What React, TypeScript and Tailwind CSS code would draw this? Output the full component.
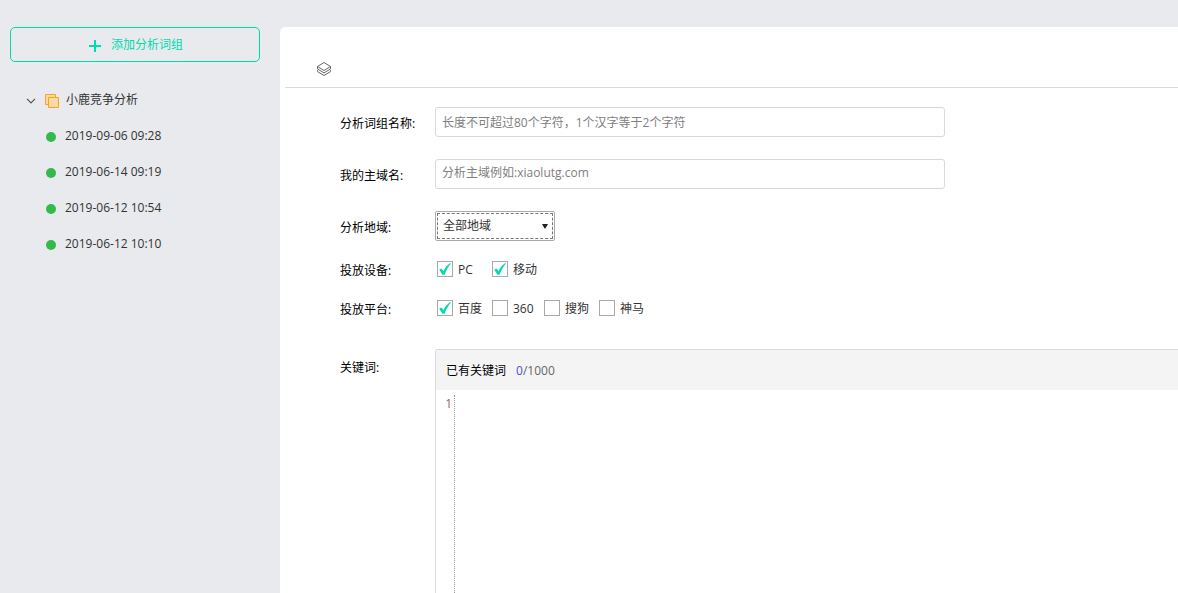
import { useState, type ReactNode } from "react";

const history = ["2019-09-06 09:28", "2019-06-14 09:19", "2019-06-12 10:54", "2019-06-12 10:10"];

function Field({ label, htmlFor, className, children }: { label: string; htmlFor?: string; className: string; children: ReactNode }) {
  return (
    <div className={`flex ${className}`}>
      {htmlFor ? (
        <label htmlFor={htmlFor} className="w-[95px] shrink-0 pt-1 text-black">{label}</label>
      ) : (
        <span className="w-[95px] shrink-0 pt-1 text-black">{label}</span>
      )}
      {children}
    </div>
  );
}

function CheckOption({ label, checked = false, className = "" }: { label: string; checked?: boolean; className?: string }) {
  return (
    <label className={`flex h-4 items-center gap-[5px] text-[#333] ${className}`}>
      <span className="grid">
        <input
          type="checkbox"
          defaultChecked={checked}
          className="peer col-start-1 row-start-1 size-4 appearance-none border border-[#a9a9a9] bg-white"
        />
        <svg viewBox="0 0 16 16" className="pointer-events-none invisible col-start-1 row-start-1 size-4 peer-checked:visible" aria-hidden="true">
          <path d="M2.2 8.4L4.6 7.4L6.4 10.2C8 6.8 10.2 4 13.2 2L13.8 2.8C11.2 5.8 9.2 9.4 7.6 13.8H5.4Z" fill="#00dbb0" />
        </svg>
      </span>
      <span className="pt-0.5">{label}</span>
    </label>
  );
}

export default function App() {
  const [keywords, setKeywords] = useState("");
  const count = keywords.split("\n").filter((line) => line.trim()).length;

  return (
    <div className="flex h-screen min-h-[480px] overflow-hidden bg-[#e8eaed] font-['Open_Sans','Noto_Sans_CJK_SC',sans-serif] text-xs leading-4 text-[#333]">
      <aside className="w-[280px] shrink-0 pt-[27px] pr-5 pl-2.5">
        <button type="button" className="flex h-[35px] w-full items-center justify-center gap-2.5 rounded-[5px] border border-[#00dbb0] pl-0.5 text-[#00dbb0]">
          <svg viewBox="0 0 12 12" className="mt-0.5 size-3" aria-hidden="true">
            <path d="M5 0H7V5H12V7H7V12H5V7H0V5H5Z" fill="currentColor" />
          </svg>
          添加分析词组
        </button>
        <nav className="pt-5">
          <a href="#group" className="flex h-9 items-center pl-4">
            <svg viewBox="0 0 10 6" className="mt-0.5 mr-[9px] h-1.5 w-2.5" fill="none" stroke="#555" strokeWidth="1.2" aria-hidden="true">
              <path d="M1 0.8L5 4.8L9 0.8" />
            </svg>
            <svg viewBox="0 0 14 14" className="mt-0.5 mr-[7px] size-3.5" fill="#fad8a8" stroke="#f5a816" aria-hidden="true">
              <path d="M0.5 0.5H10.5V10.5H0.5Z" />
              <path d="M3.5 3.5H13.5V13.5H3.5Z" />
            </svg>
            小鹿竞争分析
          </a>
          <ul>
            {history.map((time) => (
              <li key={time}>
                <a href="#record" className="flex h-9 items-center gap-[9px] pl-9">
                  <span className="mt-0.5 size-2.5 rounded-full bg-[#32ba4b]" />
                  {time}
                </a>
              </li>
            ))}
          </ul>
        </nav>
      </aside>

      <main className="mt-[27px] flex min-w-0 flex-1 flex-col rounded-tl-[5px] bg-white">
        <header className="ml-[5px] flex h-[61px] items-end border-b border-[#d9dadb] pb-[11px] pl-8">
          <svg viewBox="0 0 14 14" className="size-3.5" fill="none" stroke="#555" strokeWidth="0.9" aria-hidden="true">
            <path d="M7 0.5L13.5 4.5L7 8.5L0.5 4.5Z" />
            <path d="M0.5 4.6V6.9L7 10.9L13.5 6.9V4.6" />
            <path d="M0.5 8.2V9.6L7 13.5L13.5 9.6V8.2" />
          </svg>
        </header>

        <form className="flex min-h-0 flex-1 flex-col pt-[19px] pl-[60px]">
          <Field label="分析词组名称:" htmlFor="group-name" className="mb-[22px] items-center">
            <input
              id="group-name"
              type="text"
              placeholder="长度不可超过80个字符，1个汉字等于2个字符"
              className="h-[30px] w-[510px] min-w-0 rounded-[3px] border border-[#d9d9d9] px-1.5 outline-none placeholder:text-[#808080]"
            />
          </Field>
          <Field label="我的主域名:" htmlFor="domain" className="mb-[22px] items-center">
            <input
              id="domain"
              type="text"
              placeholder="分析主域例如:xiaolutg.com"
              className="h-[30px] w-[510px] min-w-0 rounded-[3px] border border-[#d9d9d9] px-1.5 pb-1 outline-none placeholder:text-[#808080]"
            />
          </Field>
          <Field label="分析地域:" htmlFor="region" className="mb-5 items-center">
            <div className="grid items-center">
              <select
                id="region"
                className="col-start-1 row-start-1 h-[30px] w-[120px] appearance-none rounded-[2px] border border-[#a9a9a9] bg-white px-[7px] text-[#333] outline-1 -outline-offset-3 outline-[#777] outline-dashed"
              >
                <option>全部地域</option>
              </select>
              <svg viewBox="0 0 6 5" className="pointer-events-none col-start-1 row-start-1 mr-[7px] h-[5px] w-1.5 justify-self-end" aria-hidden="true">
                <path d="M0 0H6L3.4 4.5H2.6Z" fill="#222" />
              </svg>
            </div>
          </Field>
          <Field label="投放设备:" className="mb-[23px] h-4 items-center">
            <CheckOption label="PC" checked className="ml-0.5 w-[55px]" />
            <CheckOption label="移动" checked className="w-[55px]" />
          </Field>
          <Field label="投放平台:" className="mb-[33px] h-4 items-center">
            <CheckOption label="百度" checked className="ml-0.5 w-[55px]" />
            <CheckOption label="360" className="w-[52px]" />
            <CheckOption label="搜狗" className="w-[55px]" />
            <CheckOption label="神马" className="w-[55px]" />
          </Field>
          <div className="flex min-h-0 flex-1">
            <label htmlFor="keywords" className="w-[95px] shrink-0 pt-[11px] text-black">关键词:</label>
            <div className="flex min-w-0 flex-1 flex-col rounded-tl-[3px] border-t border-l border-[#d9d9d9]">
              <div className="flex h-10 shrink-0 items-center gap-2.5 bg-[#f4f4f4] pt-0.5 pl-2.5">
                <span className="text-black">已有关键词</span>
                <span className="text-[#666]"><span className="text-[#4a4af0]">{count}</span>/1000</span>
              </div>
              <div className="flex min-h-0 flex-1 pt-[5px]">
                <div className="w-[19px] shrink-0 border-r border-dotted border-[#999] pt-px pr-0.5 text-right text-[#8a6d4b]">1</div>
                <textarea
                  id="keywords"
                  value={keywords}
                  onChange={(event) => setKeywords(event.target.value)}
                  className="min-w-0 flex-1 resize-none px-1 pt-px outline-none"
                />
              </div>
            </div>
          </div>
        </form>
      </main>
    </div>
  );
}
